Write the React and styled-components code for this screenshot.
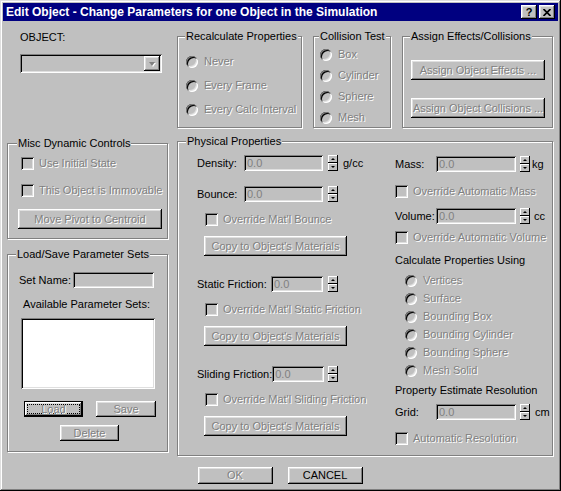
import React from 'react'
import styled, { createGlobalStyle } from 'styled-components'

const GlobalStyle = createGlobalStyle`
  html, body {
    margin: 0;
    padding: 0;
    background: #c0c0c0;
  }
  body {
    font-family: "Liberation Sans", Arial, sans-serif;
    font-size: 11px;
    line-height: 13px;
    color: #000;
  }
  * { box-sizing: border-box; }
`

const raised = `
  box-shadow: inset -1px -1px #000, inset 1px 1px #fff,
    inset -2px -2px #808080, inset 2px 2px #dfdfdf;
`
const sunken = `
  box-shadow: inset 1px 1px #808080, inset -1px -1px #fff,
    inset 2px 2px #000, inset -2px -2px #dfdfdf;
`
const disabledText = `
  color: #808080;
  text-shadow: 1px 1px 0 #fff;
`

const Window = styled.div`
  width: 561px;
  height: 491px;
  padding: 3px;
  background: #c0c0c0;
  box-shadow: inset -1px -1px #000, inset 1px 1px #dfdfdf,
    inset -2px -2px #808080, inset 2px 2px #fff;
  display: flex;
  flex-direction: column;
`

const TitleBar = styled.div`
  height: 18px;
  flex-shrink: 0;
  background: #000080;
  color: #fff;
  font-weight: bold;
  font-size: 12px;
  display: flex;
  align-items: center;
  padding: 0 3px 0 3px;
`

const TitleText = styled.span`
  flex: 1;
  white-space: nowrap;
`

const TitleButton = styled.span`
  width: 16px;
  height: 14px;
  background: #c0c0c0;
  ${raised}
  color: #000;
  display: flex;
  align-items: center;
  justify-content: center;
  font-weight: bold;
  font-size: 11px;
  margin-left: ${p => p.$gap || 0}px;
`

const Body = styled.div`
  flex: 1;
  display: grid;
  grid-template-columns: 161px 376px;
  grid-template-rows: 98px auto auto;
  column-gap: 9px;
  row-gap: 7px;
  padding: 9px 0 0 4px;
`

const ObjectPicker = styled.div`
  display: flex;
  flex-direction: column;
  align-items: flex-start;
  padding: 1px 0 0 13px;
`

const Combo = styled.div`
  width: 142px;
  height: 19px;
  margin-top: 10px;
  padding: 2px;
  background: #c0c0c0;
  ${sunken}
  display: flex;
  justify-content: flex-end;
`

const ComboButton = styled.span`
  width: 16px;
  height: 100%;
  background: #c0c0c0;
  ${raised}
  display: flex;
  align-items: center;
  justify-content: center;
`

const Arrow = styled.span`
  width: ${p => p.$tip}px;
  height: 0;
  border-left: ${p => p.$side}px solid transparent;
  border-right: ${p => p.$side}px solid transparent;
  ${p => (p.$up ? 'border-bottom' : 'border-top')}: ${p => p.$h}px solid ${p => p.$color || '#000'};
  ${p => (p.$dim ? 'filter: drop-shadow(1px 1px 0 #fff);' : '')}
`

const TopGroups = styled.div`
  display: flex;
  gap: 11px;
  height: 98px;
`

const Group = styled.fieldset`
  margin: 0;
  padding: 0;
  min-width: 0;
  border: 1px solid #808080;
  box-shadow: 1px 1px 0 #fff, inset 1px 1px 0 #fff;
  width: ${p => (p.$w ? `${p.$w}px` : 'auto')};
  flex-shrink: 0;
`

const Legend = styled.legend`
  padding: 0 1px;
  margin-left: ${p => p.$inset ?? 7}px;
  height: 13px;
  line-height: 13px;
  background: #c0c0c0;
  white-space: nowrap;
`

const RadioList = styled.div`
  display: flex;
  flex-direction: column;
  align-items: flex-start;
  padding: ${p => p.$top}px 0 0 ${p => p.$left}px;
  gap: ${p => p.$gap}px;
`

const RadioRow = styled.div`
  display: flex;
  align-items: center;
  height: 13px;
  white-space: nowrap;
  ${disabledText}
`

const RadioDot = styled.span`
  width: 12px;
  height: 12px;
  flex-shrink: 0;
  border-radius: 50%;
  background: #c0c0c0;
  box-shadow: inset 1px 1px #808080, inset -1px -1px #fff,
    inset 2px 2px #000, inset -2px -2px #dfdfdf;
  margin-right: 6px;
`

const ButtonStack = styled.div`
  display: flex;
  flex-direction: column;
  align-items: flex-start;
  padding: 17px 0 0 8px;
  gap: 18px;
`

const Button = styled.button`
  font: inherit;
  width: ${p => p.$w}px;
  height: ${p => p.$h || 20}px;
  margin: 0;
  padding: 0;
  border: 0;
  background: #c0c0c0;
  ${raised}
  ${p => (p.disabled ? disabledText : 'color: #000;')}
  display: inline-flex;
  align-items: center;
  justify-content: center;
  white-space: nowrap;
  flex-shrink: 0;
`

const DefaultButton = styled(Button)`
  box-shadow: inset 0 0 0 1px #000, inset -2px -2px #000, inset 2px 2px #fff,
    inset -3px -3px #808080, inset 3px 3px #dfdfdf;
  padding: 3px;
`

const FocusRing = styled.span`
  flex: 1;
  align-self: stretch;
  border: 1px dotted #000;
  display: flex;
  align-items: center;
  justify-content: center;
`

const SideColumn = styled.div`
  display: flex;
  flex-direction: column;
  padding-top: 2px;
  gap: 9px;
`

const MiscInner = styled.div`
  display: flex;
  flex-direction: column;
  align-items: flex-start;
  padding: 7px 0 9px 10px;
`

const CheckRow = styled.div`
  display: flex;
  align-items: center;
  height: 13px;
  white-space: nowrap;
  margin-top: ${p => p.$top || 0}px;
  margin-left: ${p => p.$indent || 0}px;
  ${disabledText}
`

const CheckBox = styled.span`
  width: 13px;
  height: 13px;
  flex-shrink: 0;
  background: #c0c0c0;
  ${sunken}
  margin-right: ${p => p.$gap ?? 5}px;
`

const Spaced = styled.div`
  margin-top: ${p => p.$top || 0}px;
  margin-left: ${p => p.$left || 0}px;
`

const SetsInner = styled.div`
  display: flex;
  flex-direction: column;
  align-items: flex-start;
  padding: 11px 13px 10px 11px;
`

const SetNameRow = styled.div`
  display: flex;
  align-items: center;
  justify-content: space-between;
  align-self: stretch;
  height: 16px;
`

const Edit = styled.div`
  width: ${p => p.$w}px;
  height: 16px;
  flex-shrink: 0;
  padding: 2px 3px 0;
  background: ${p => (p.$white ? '#fff' : '#c0c0c0')};
  ${sunken}
  color: #808080;
  line-height: 12px;
`

const CenterLabel = styled.div`
  align-self: stretch;
  text-align: center;
  margin-top: 10px;
`

const ListBox = styled.div`
  width: 134px;
  height: 71px;
  margin: 7px 0 0 2px;
  background: #fff;
  ${sunken}
`

const ButtonRow = styled.div`
  display: flex;
  gap: 13px;
  margin-top: 12px;
  padding-left: 5px;
`

const PhysicalGrid = styled.div`
  display: grid;
  grid-template-columns: 198px 1fr;
  align-items: start;
  padding: 7px 0 6px 19px;
`

const PropertyColumn = styled.div`
  display: flex;
  flex-direction: column;
  align-items: flex-start;
  padding-top: ${p => p.$top || 0}px;
`

const FieldRow = styled.div`
  display: flex;
  align-items: center;
  height: 16px;
  margin-top: ${p => p.$top || 0}px;
  white-space: nowrap;
`

const FieldBody = styled.div`
  width: ${p => p.$span}px;
  display: flex;
  align-items: center;
  justify-content: space-between;
`

const Spinner = styled.div`
  width: 10px;
  height: 16px;
  display: flex;
  flex-direction: column;
  margin-left: ${p => p.$gap}px;
`

const SpinHalf = styled.span`
  flex: 1;
  background: #c0c0c0;
  box-shadow: inset -1px -1px #000, inset 1px 1px #fff;
  display: flex;
  align-items: center;
  justify-content: center;
`

const Unit = styled.span`
  margin-left: ${p => p.$gap}px;
`

const SectionLabel = styled.div`
  margin-top: ${p => p.$top}px;
  white-space: nowrap;
`

const Footer = styled.div`
  grid-column: 1 / -1;
  display: flex;
  justify-content: center;
  gap: 15px;
  margin-top: 4px;
`

function Radio({ children }) {
  return (
    <RadioRow>
      <RadioDot />
      {children}
    </RadioRow>
  )
}

function Check({ children, top, indent, gap }) {
  return (
    <CheckRow $top={top} $indent={indent}>
      <CheckBox $gap={gap} />
      {children}
    </CheckRow>
  )
}

function Field({ label, span, width, spinGap, unit, unitGap, top }) {
  return (
    <FieldRow $top={top}>
      <FieldBody $span={span}>
        <span>{label}</span>
        <Edit $w={width}>0.0</Edit>
      </FieldBody>
      <Spinner $gap={spinGap}>
        <SpinHalf>
          <Arrow $up $tip={1} $side={2} $h={2} />
        </SpinHalf>
        <SpinHalf>
          <Arrow $tip={1} $side={2} $h={2} />
        </SpinHalf>
      </Spinner>
      {unit && <Unit $gap={unitGap}>{unit}</Unit>}
    </FieldRow>
  )
}

function FrictionBlock({ label, width, top }) {
  return (
    <>
      <Field label={label} span={126} width={width} spinGap={5} top={top} />
      <Check top={11} indent={8}>
        {`Override Mat'l ${label.replace(':', '')}`}
      </Check>
      <Spaced $top={10} $left={7}>
        <Button $w={143} disabled>
          Copy to Object's Materials
        </Button>
      </Spaced>
    </>
  )
}

function CloseGlyph() {
  return (
    <svg width="8" height="7" viewBox="0 0 8 7">
      <path d="M0.5 0 L7.5 7 M7.5 0 L0.5 7" stroke="#000" strokeWidth="1.7" />
    </svg>
  )
}

export default function App() {
  return (
    <>
      <GlobalStyle />
      <Window>
        <TitleBar>
          <TitleText>Edit Object - Change Parameters for one Object in the Simulation</TitleText>
          <TitleButton>?</TitleButton>
          <TitleButton $gap={2}>
            <CloseGlyph />
          </TitleButton>
        </TitleBar>

        <Body>
          <ObjectPicker>
            <span>OBJECT:</span>
            <Combo>
              <ComboButton>
                <Arrow $tip={1} $side={3} $h={4} $color="#808080" $dim />
              </ComboButton>
            </Combo>
          </ObjectPicker>

          <TopGroups>
            <Group $w={125}>
              <Legend>Recalculate Properties</Legend>
              <RadioList $top={12} $left={8} $gap={11}>
                <Radio>Never</Radio>
                <Radio>Every Frame</Radio>
                <Radio>Every Calc Interval</Radio>
              </RadioList>
            </Group>
            <Group $w={78}>
              <Legend $inset={5}>Collision Test</Legend>
              <RadioList $top={5} $left={6} $gap={8}>
                <Radio>Box</Radio>
                <Radio>Cylinder</Radio>
                <Radio>Sphere</Radio>
                <Radio>Mesh</Radio>
              </RadioList>
            </Group>
            <Group $w={151}>
              <Legend>Assign Effects/Collisions</Legend>
              <ButtonStack>
                <Button $w={134} disabled>Assign Object Effects ...</Button>
                <Button $w={134} disabled>Assign Object Collisions ...</Button>
              </ButtonStack>
            </Group>
          </TopGroups>

          <SideColumn>
            <Group>
              <Legend $inset={9}>Misc Dynamic Controls</Legend>
              <MiscInner>
                <Check indent={3} gap={5}>Use Initial State</Check>
                <Check top={14} indent={3} gap={5}>This Object is Immovable</Check>
                <Spaced $top={12}>
                  <Button $w={144} disabled>Move Pivot to Centroid</Button>
                </Spaced>
              </MiscInner>
            </Group>
            <Group>
              <Legend $inset={8}>Load/Save Parameter Sets</Legend>
              <SetsInner>
                <SetNameRow>
                  <span>Set Name:</span>
                  <Edit $w={81} />
                </SetNameRow>
                <CenterLabel>Available Parameter Sets:</CenterLabel>
                <ListBox />
                <ButtonRow>
                  <DefaultButton $w={59} $h={16} disabled>
                    <FocusRing>Load</FocusRing>
                  </DefaultButton>
                  <Button $w={60} $h={16} disabled>Save</Button>
                </ButtonRow>
                <Spaced $top={8} $left={41}>
                  <Button $w={59} $h={16} disabled>Delete</Button>
                </Spaced>
              </SetsInner>
            </Group>
          </SideColumn>

          <Group>
            <Legend $inset={8}>Physical Properties</Legend>
            <PhysicalGrid>
              <PropertyColumn>
                <Field label="Density:" span={126} width={79} spinGap={5} unit="g/cc" unitGap={5} />
                <FrictionBlock label="Bounce:" width={79} top={15} />
                <FrictionBlock label="Static Friction:" width={52} top={20} />
                <FrictionBlock label="Sliding Friction:" width={52} top={20} />
              </PropertyColumn>

              <PropertyColumn $top={1}>
                <Field label="Mass:" span={121} width={80} spinGap={4} unit="kg" unitGap={2} />
                <Check top={13}>Override Automatic Mass</Check>
                <Field label="Volume:" span={121} width={80} spinGap={4} unit="cc" unitGap={4} top={10} />
                <Check top={7}>Override Automatic Volume</Check>
                <SectionLabel $top={10}>Calculate Properties Using</SectionLabel>
                <RadioList $top={7} $left={10} $gap={5}>
                  <Radio>Vertices</Radio>
                  <Radio>Surface</Radio>
                  <Radio>Bounding Box</Radio>
                  <Radio>Bounding Cylinder</Radio>
                  <Radio>Bounding Sphere</Radio>
                  <Radio>Mesh Solid</Radio>
                </RadioList>
                <SectionLabel $top={7}>Property Estimate Resolution</SectionLabel>
                <Field label="Grid:" span={121} width={80} spinGap={4} unit="cm" unitGap={5} top={7} />
                <Check top={12}>Automatic Resolution</Check>
              </PropertyColumn>
            </PhysicalGrid>
          </Group>

          <Footer>
            <Button $w={75} $h={17} disabled>OK</Button>
            <Button $w={75} $h={17}>CANCEL</Button>
          </Footer>
        </Body>
      </Window>
    </>
  )
}
